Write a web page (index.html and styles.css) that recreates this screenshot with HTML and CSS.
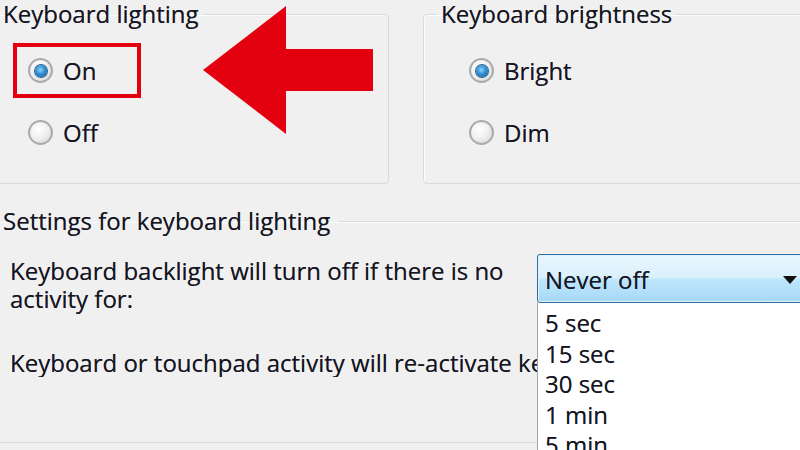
FILE: index.html
```html
<!DOCTYPE html>
<html lang="en">
<head>
<meta charset="utf-8">
<title>Keyboard lighting</title>
<link rel="stylesheet" href="styles.css">
</head>
<body>
<div class="page">
  <div class="top">
    <fieldset class="group g1">
      <legend>Keyboard lighting</legend>
      <div class="highlight">
        <label class="radio"><span class="dot checked"></span>On</label>
      </div>
      <label class="radio off-row"><span class="dot"></span>Off</label>
    </fieldset>
    <fieldset class="group g2">
      <legend>Keyboard brightness</legend>
      <label class="radio bright-row"><span class="dot checked"></span>Bright</label>
      <label class="radio dim-row"><span class="dot"></span>Dim</label>
    </fieldset>
  </div>
  <fieldset class="group settings">
    <legend>Settings for keyboard lighting</legend>
    <div class="row">
      <div class="desc">
        <p>Keyboard backlight will turn off if there is no activity for:</p>
        <p class="nowrap">Keyboard or touchpad activity will re-activate keyboard lighting.</p>
      </div>
      <div class="combo-wrap">
        <div class="combo"><span>Never off</span><span class="caret"></span></div>
        <ul class="list">
          <li>5 sec</li>
          <li>15 sec</li>
          <li>30 sec</li>
          <li>1 min</li>
          <li>5 min</li>
        </ul>
      </div>
    </div>
  </fieldset>
  <svg class="arrow" width="172" height="130" viewBox="0 0 172 130" aria-hidden="true">
    <polygon points="0,64 83,0 83,43 170,43 170,85 83,85 83,128" fill="#e3000f"/>
  </svg>
</div>
</body>
</html>
```
FILE: styles.css
```css
html, body {
  margin: 0;
  padding: 0;
  background: #f0f0f0;
  overflow: hidden;
}
body {
  width: 800px;
  height: 450px;
  font-family: "Open Sans", "Noto Sans", "DejaVu Sans", sans-serif;
  font-size: 24px;
  color: #15151f;
  text-shadow: 0 0 0.4px rgba(20, 20, 40, 0.6);
}
.page {
  position: relative;
  margin-left: -10px;
  width: 830px;
}
.top {
  display: flex;
  gap: 34px;
}
.group {
  margin: 0;
  padding: 0;
  min-width: 0;
  box-sizing: border-box;
  border: 1px solid #d3dce3;
  border-radius: 4px;
  box-shadow: inset 1px 1px 0 #fafcfd;
}
.group legend {
  padding: 0 4px;
  line-height: 28px;
  height: 28px;
}
.g1 {
  width: 399px;
  height: 184px;
  padding-left: 22px;
}
.g1 legend { margin-left: -14px; }
.g2 {
  flex: 1;
  height: 184px;
  padding-left: 45px;
}
.g2 legend { margin-left: -32px; }
.radio {
  display: flex;
  align-items: center;
  height: 29px;
  line-height: 29px;
  gap: 10px;
}
.dot {
  width: 25px;
  height: 25px;
  border-radius: 50%;
  box-sizing: border-box;
  border: 2px solid #a9abad;
  background: radial-gradient(circle at 40% 35%, #ffffff 0%, #f1f1f1 45%, #cfd2d4 100%);
  display: flex;
  align-items: center;
  justify-content: center;
  flex: none;
}
.dot.checked::after {
  content: "";
  width: 12px;
  height: 12px;
  border-radius: 50%;
  background: radial-gradient(circle at 45% 40%, #8fd6fb 0%, #2f8fd6 45%, #0d4f8c 100%);
  box-shadow: 0 0 0 1px #2b5f8e;
}
.highlight {
  width: 128px;
  box-sizing: border-box;
  border: 4px solid #e3000f;
  padding: 9px 0 9px 11px;
  margin-top: 15px;
}
.off-row {
  margin-top: 20px;
  margin-left: 15px;
}
.bright-row { margin-top: 28px; }
.dim-row { margin-top: 33px; }
.settings {
  margin-top: 23px;
  height: 236px;
  padding-left: 19px;
}
.settings legend {
  margin-left: -11px;
  padding: 0 8px 0 4px;
}
.row {
  display: flex;
}
.desc {
  width: 527px;
  flex: none;
  padding-top: 22px;
  overflow: hidden;
}
.desc p {
  margin: 0;
  line-height: 28px;
}
.desc .nowrap {
  white-space: nowrap;
  margin-top: 36px;
}
.combo-wrap {
  position: relative;
  margin-top: 19px;
  width: 275px;
}
.combo {
  box-sizing: border-box;
  height: 49px;
  border: 1px solid #2f6ea3;
  border-radius: 3px;
  background: linear-gradient(to bottom, #eaf6fd 0%, #d9f0fc 48%, #bee6fd 52%, #a7d9f5 100%);
  box-shadow: inset 0 0 0 1px #dff1fb;
  display: flex;
  align-items: center;
  justify-content: space-between;
  padding: 2px 14px 0 7px;
}
.caret {
  width: 0;
  height: 0;
  border-left: 7px solid transparent;
  border-right: 7px solid transparent;
  border-top: 8px solid #111;
}
.list {
  position: absolute;
  top: 49px;
  left: 0;
  width: 275px;
  height: 160px;
  margin: 0;
  padding: 5px 0 0 7px;
  list-style: none;
  background: #fff;
  border-left: 1px solid #9da3a8;
  box-sizing: border-box;
  z-index: 2;
  overflow: hidden;
}
.list li {
  height: 30.5px;
  line-height: 30.5px;
}
.arrow {
  position: absolute;
  left: 213px;
  top: 6px;
}
```
